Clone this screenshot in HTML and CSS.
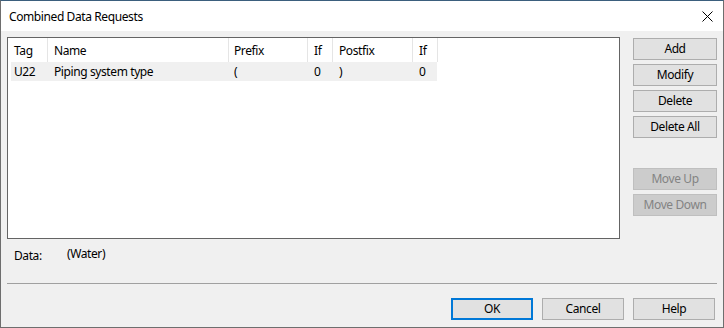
FILE: index.html
```html
<!DOCTYPE html>
<html>
<head>
<meta charset="utf-8">
<link rel="stylesheet" href="styles.css">
</head>
<body>
<div class="window">
  <div class="titlebar">
    <span class="title">Combined Data Requests</span>
    <svg class="close" width="11" height="11" viewBox="0 0 11 11"><path d="M0.5 0.5 L10.5 10.5 M10.5 0.5 L0.5 10.5" stroke="#000" stroke-width="1" fill="none"/></svg>
  </div>
  <div class="client">
    <div class="main">
      <div class="list">
        <div class="row head">
          <div class="c c-tag">Tag</div>
          <div class="c c-name">Name</div>
          <div class="c c-pre">Prefix</div>
          <div class="c c-if">If</div>
          <div class="c c-post">Postfix</div>
          <div class="c c-if">If</div>
        </div>
        <div class="row data sel">
          <div class="c c-tag">U22</div>
          <div class="c c-name">Piping system type</div>
          <div class="c c-pre">(</div>
          <div class="c c-if">0</div>
          <div class="c c-post">)</div>
          <div class="c c-if">0</div>
        </div>
      </div>
      <div class="side">
        <button class="btn">Add</button>
        <button class="btn">Modify</button>
        <button class="btn">Delete</button>
        <button class="btn">Delete All</button>
        <button class="btn disabled gap">Move Up</button>
        <button class="btn disabled">Move Down</button>
      </div>
    </div>
    <div class="datarow">
      <span class="label">Data:</span>
      <span class="value">(Water)</span>
    </div>
    <div class="sep"></div>
    <div class="footer">
      <button class="btn fbtn default">OK</button>
      <button class="btn fbtn">Cancel</button>
      <button class="btn fbtn">Help</button>
    </div>
  </div>
</div>
</body>
</html>
```

FILE: styles.css
```css
* { box-sizing: border-box; }
html, body { margin: 0; padding: 0; }
body {
  width: 724px;
  height: 328px;
  overflow: hidden;
  background: #f0f0f0;
  font-family: "Noto Sans", "Open Sans", sans-serif;
  font-size: 12px;
  letter-spacing: -0.4px;
  color: #000;
}
.window {
  width: 724px;
  height: 328px;
  border: 1px solid #6e6e6e;
  border-top-color: #3b5f7d;
  background: #f0f0f0;
  display: flex;
  flex-direction: column;
}
.titlebar {
  height: 30px;
  background: #fff;
  display: flex;
  align-items: center;
  justify-content: space-between;
  padding: 0 9px 0 8px;
}
.title {
  font-size: 12px;
  line-height: 16px;
  margin-top: 1px;
}
.close { display: block; margin-right: 1px; margin-top: 1px; }
.client {
  flex: 1;
  padding: 6px 6px 0 6px;
  display: flex;
  flex-direction: column;
}
.main {
  display: flex;
  gap: 13px;
  align-items: flex-start;
}
.list {
  width: 613px;
  height: 202px;
  background: #fff;
  border: 1px solid #646464;
}
.row {
  display: flex;
  width: 430px;
}
.row.head {
  height: 24px;
  align-items: center;
}
.row.data {
  height: 19px;
  align-items: center;
  margin-left: 3px;
  width: 426px;
}
.row.sel { background: #f0f0f0; }
.c {
  line-height: 16px;
  padding-left: 6px;
  white-space: nowrap;
  flex: none;
}
.head .c {
  height: 24px;
  line-height: 24px;
  border-right: 1px solid #e5e5e5;
  padding-top: 1px;
}
.c-tag { width: 40px; }
.data .c-tag { width: 37px; padding-left: 3px; }
.c-name { width: 181px; }
.c-pre { width: 79px; padding-left: 5px; }
.c-if { width: 25px; }
.c-post { width: 80px; }
.btn {
  font-family: inherit;
  font-size: 12px;
  letter-spacing: -0.4px;
  color: #000;
  background: #e1e1e1;
  border: 1px solid #adadad;
  height: 22px;
  padding: 0;
  margin: 0;
  line-height: 18px;
}
.side {
  width: 84px;
  display: flex;
  flex-direction: column;
  gap: 4px;
  margin-top: 1px;
}
.side .btn { width: 84px; }
.btn.gap { margin-top: 26px; }
.btn.disabled {
  background: #cccccc;
  border-color: #bfbfbf;
  color: #838383;
}
.datarow {
  display: flex;
  align-items: flex-start;
  height: 44px;
  padding-top: 6px;
}
.label { padding-left: 7px; width: 60px; margin-top: 2px; }
.sep {
  height: 1px;
  background: #a0a0a0;
  width: 710px;
}
.footer {
  display: flex;
  justify-content: flex-end;
  gap: 9px;
  padding-top: 14px;
  padding-right: 2px;
}
.fbtn { width: 82px; }
.btn.default {
  border: 2px solid #0078d7;
  line-height: 16px;
}
```
